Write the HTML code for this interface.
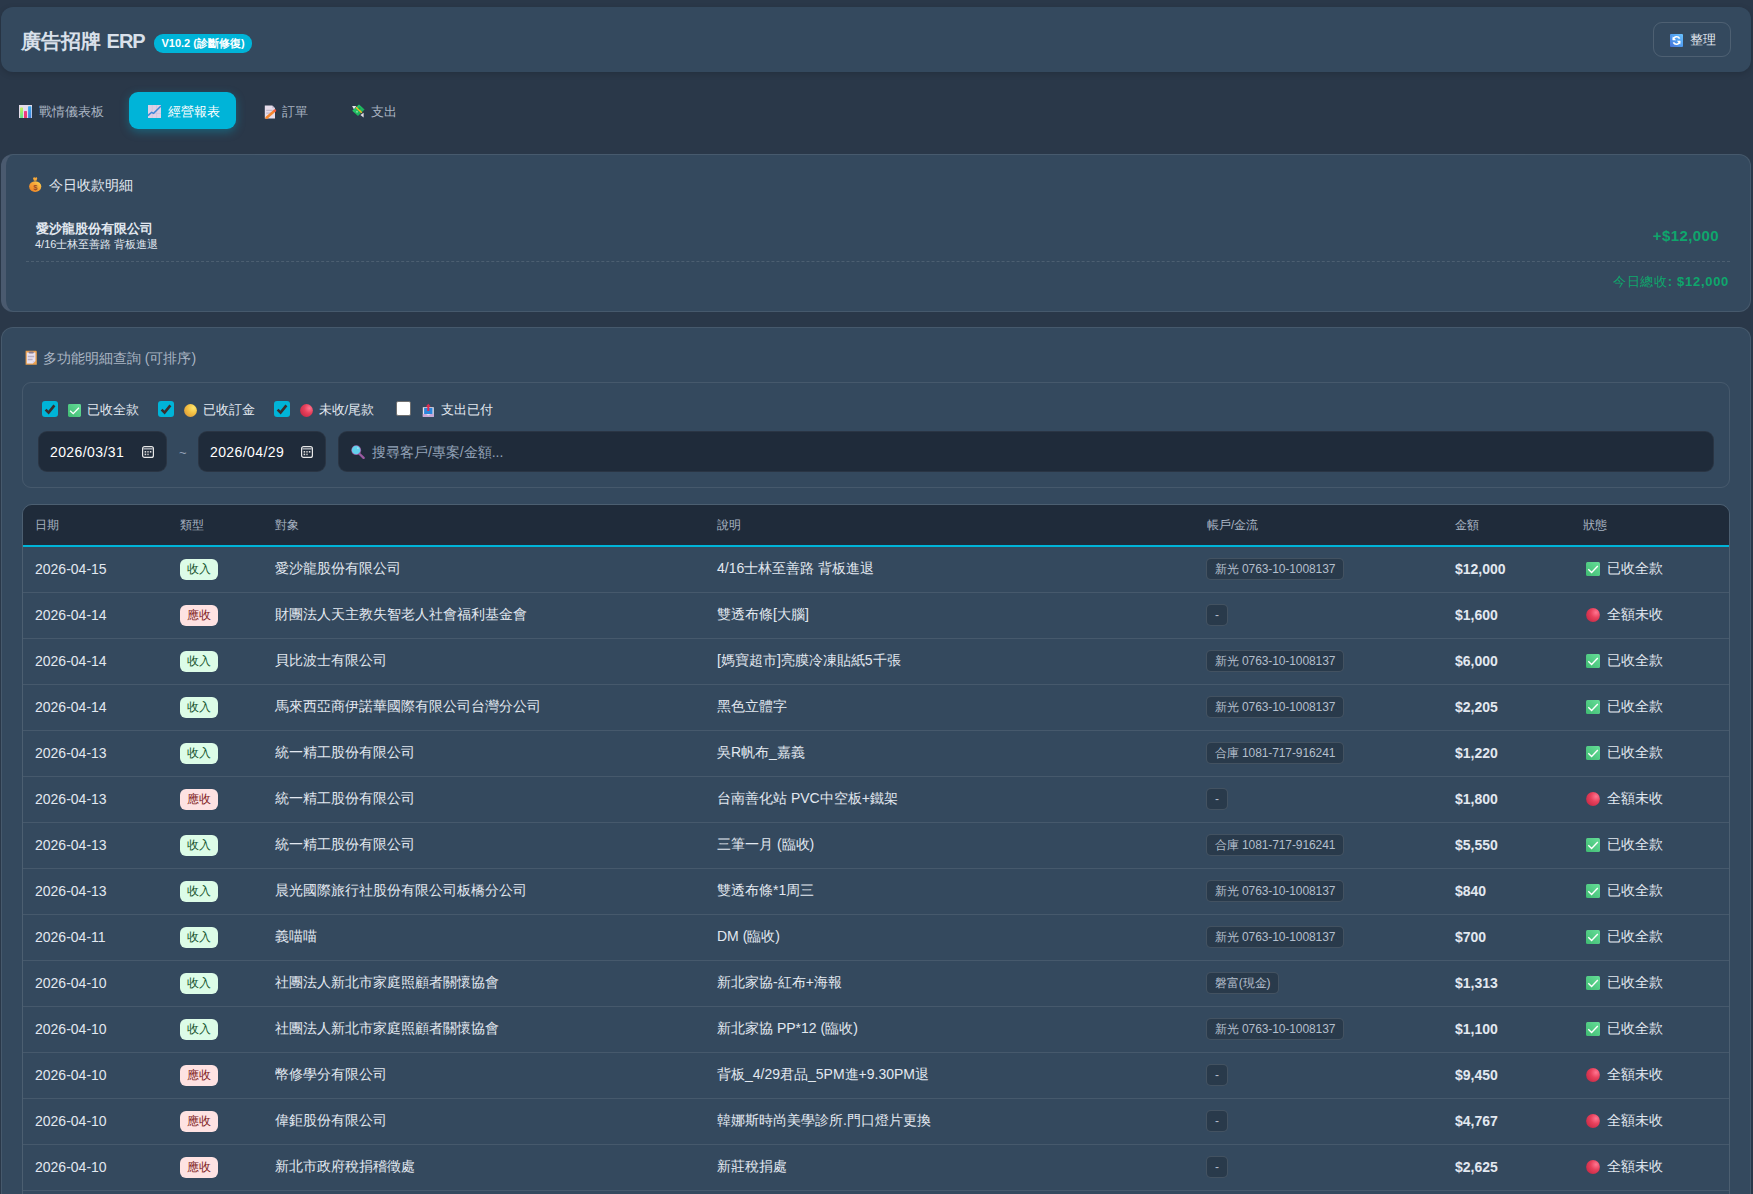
<!DOCTYPE html>
<html><head><meta charset="utf-8">
<style>
*{box-sizing:border-box;margin:0;padding:0}
html,body{width:1753px;height:1194px;overflow:hidden;background:#2a3849;font-family:"Liberation Sans",sans-serif;color:#e2e8f0}
.abs{position:absolute}
.card{position:absolute;background:#34495e;border-radius:12px}
#hdr{left:1px;top:7px;width:1750px;height:65px;box-shadow:0 2px 6px rgba(0,0,0,.15)}
#title{left:20px;top:22px;font-size:20px;font-weight:bold;color:#d9e0ea;line-height:24px;white-space:nowrap}
#badge{left:153px;top:27px;width:98px;height:19px;border-radius:9px;background:#00b4d8;color:#fff;font-size:11px;font-weight:bold;line-height:19px;text-align:center;white-space:nowrap}
#btn{left:1652px;top:15px;width:78px;height:35px;border:1px solid rgba(255,255,255,.13);border-radius:9px;font-size:13px;color:#e2e8f0;line-height:33px;white-space:nowrap;padding-left:16px}
.emo{font-size:13px}
.ei{vertical-align:-2px}
.tab .ei{vertical-align:-2px;margin-right:3px}
.tab{position:absolute;top:92px;height:37px;line-height:39px;font-size:13px;color:#a9b4c2;white-space:nowrap;border-radius:9px}
.tab.on{background:#00b4d8;color:#fff;font-weight:500;box-shadow:0 3px 10px rgba(0,180,216,.35)}
#today{left:1px;top:154px;width:1750px;height:158px;border:1px solid rgba(255,255,255,.09);border-left:5px solid #4a5a6f}
#main{left:1px;top:327px;width:1750px;height:900px;border:1px solid rgba(255,255,255,.09)}
.ttl{position:absolute;font-size:14px;white-space:nowrap;line-height:20px}
#filter{position:absolute;left:20px;top:54px;width:1708px;height:106px;border:1px solid rgba(255,255,255,.09);border-radius:9px}
.cb{position:absolute;top:18px;width:16px;height:16px;border-radius:3px;background:#00b4d8}
.cb.off{background:#fff;border:1px solid #6f6f6f;border-radius:2px;width:15px;height:15px;top:18px}
.cbl .emo{position:relative;top:2px}
.cbl .ic{position:relative;top:3px;margin-right:2px}
.cbl{position:absolute;top:18px;font-size:13px;line-height:18px;white-space:nowrap;color:#e2e8f0}
.cal{position:absolute;right:12px;top:14px}
.inp{position:absolute;top:48px;height:41px;background:#1f2b3a;border-radius:9px;border:1px solid rgba(255,255,255,.05);font-size:14px;line-height:41px;color:#fff;white-space:nowrap}
#tbl{position:absolute;left:20px;top:176px;width:1708px;height:720px;border:1px solid rgba(255,255,255,.12);border-radius:10px;overflow:hidden}
table{border-collapse:collapse;table-layout:fixed;width:1706px}
thead th{background:#1f2b3a;height:41px;text-align:left;font-weight:normal;font-size:12px;color:#a8b3c1;padding:0 12px;border-bottom:2px solid #00b4d8}
tbody td{height:46px;padding:0 12px;font-size:14px;color:#e2e8f0;border-bottom:1px solid rgba(255,255,255,.09);white-space:nowrap}
.bdg{display:inline-block;width:38px;height:21px;line-height:21px;text-align:center;font-size:12px;border-radius:6px;vertical-align:middle}
.bdg.in{background:#dcfce7;color:#14532d}
.bdg.ar{background:#fee2e2;color:#7f1d1d}
.pill{display:inline-block;height:22px;line-height:21px;padding:0 8px;margin-left:-1px;font-size:12px;color:#b4bfcc;background:rgba(0,0,0,.2);border:1px solid rgba(255,255,255,.12);border-radius:5px;vertical-align:middle;letter-spacing:-.1px}
.amt{font-weight:bold}
.sti{margin-right:7px;margin-left:3px;vertical-align:-3px}
</style></head><body>
<svg width="0" height="0" style="position:absolute"><defs>
<linearGradient id="gok" x1="0" y1="1" x2="1" y2="0"><stop offset="0" stop-color="#3fba72"/><stop offset="1" stop-color="#66de98"/></linearGradient>
<radialGradient id="gred" cx="0.72" cy="0.32" r="0.85"><stop offset="0" stop-color="#ff7590"/><stop offset="0.45" stop-color="#e8415c"/><stop offset="1" stop-color="#c42844"/></radialGradient>
<radialGradient id="gyel" cx="0.72" cy="0.3" r="0.85"><stop offset="0" stop-color="#ffe66e"/><stop offset="0.5" stop-color="#f3c143"/><stop offset="1" stop-color="#dc9a3a"/></radialGradient>
<linearGradient id="gblu" x1="0" y1="1" x2="1" y2="0"><stop offset="0" stop-color="#4670d6"/><stop offset="0.5" stop-color="#4f9cf0"/><stop offset="1" stop-color="#6cc4ff"/></linearGradient>
<linearGradient id="gbag" x1="0" y1="1" x2="1" y2="0"><stop offset="0" stop-color="#ec7d22"/><stop offset="0.6" stop-color="#f6a83a"/><stop offset="1" stop-color="#ffdc55"/></linearGradient>
<linearGradient id="gbar1" x1="0" y1="0" x2="0" y2="1"><stop offset="0" stop-color="#c4f25a"/><stop offset="1" stop-color="#5ee38a"/></linearGradient>
<linearGradient id="gbar2" x1="0" y1="0" x2="0" y2="1"><stop offset="0" stop-color="#f2398c"/><stop offset="1" stop-color="#e93a6a"/></linearGradient>
<linearGradient id="gbar3" x1="0" y1="0" x2="0" y2="1"><stop offset="0" stop-color="#3aaaf2"/><stop offset="1" stop-color="#3f7fd8"/></linearGradient>
<linearGradient id="gcash" x1="0" y1="0" x2="1" y2="1"><stop offset="0" stop-color="#27d46a"/><stop offset="1" stop-color="#1aa456"/></linearGradient>
</defs></svg>

<div class="card" id="hdr">
  <div class="abs" id="title">廣告招牌 <span style="letter-spacing:-1px">ERP</span></div>
  <div class="abs" id="badge">V10.2 (診斷修復)</div>
  <div class="abs" id="btn"><svg class="ic" width="13" height="13" viewBox="0 0 13 13" style="vertical-align:-3px;margin-right:3px"><rect x="0" y="0" width="13" height="13" rx="1" fill="url(#gblu)"/><path d="M3.2 5.6 A3.4 3.4 0 0 1 9.6 4.6" fill="none" stroke="#fff" stroke-width="1.6"/><path d="M2.6 2.6 L2.6 6.2 L6.2 6.2 Z" fill="#fff"/><path d="M9.8 7.4 A3.4 3.4 0 0 1 3.4 8.4" fill="none" stroke="#fff" stroke-width="1.6"/><path d="M10.4 10.4 L10.4 6.8 L6.8 6.8 Z" fill="#fff"/></svg> 整理</div>
</div>

<div class="tab" style="left:1px;width:120px;padding-left:18px"><svg class="ei" width="13" height="13" viewBox="0 0 13 13"><rect x="0" y="0" width="13" height="13" fill="#e4dcea"/><rect x="1.1" y="2.5" width="2.9" height="10.5" rx="0.6" fill="url(#gbar1)"/><rect x="5" y="6.1" width="3" height="6.9" rx="0.6" fill="url(#gbar2)"/><rect x="9.1" y="1.2" width="3.2" height="11.8" rx="0.6" fill="url(#gbar3)"/></svg> 戰情儀表板</div>
<div class="tab on" style="left:129px;width:107px;padding-left:19px"><svg class="ei" width="13" height="13" viewBox="0 0 13 13"><rect x="0" y="0" width="13" height="13" fill="#ddd0e6"/><path d="M4.3 0V13M8.6 0V13M0 8.5H13" stroke="#cbbdd6" stroke-width="0.5"/><path d="M0 10.6 L3.6 7.3 L5.6 8.3 L13 1" fill="none" stroke="#3c86d8" stroke-width="1.5"/></svg> 經營報表</div>
<div class="tab" style="left:244px;width:83px;padding-left:18px"><svg class="ei" width="13" height="13" viewBox="0 0 13 13" style="overflow:visible"><g transform="translate(2.2,0.5)"><path d="M0.6 0 H8 L10.8 2.8 V13 H0.6 Z" fill="#e6dcea"/><path d="M8 0 V2.8 H10.8" fill="#c8bcd0"/><path d="M2 4.8H8.4M2 7.6H7" stroke="#b6aabf" stroke-width="0.9"/><path d="M2.4 12.2 L9.6 6" stroke="#f5862e" stroke-width="2.6" stroke-linecap="round"/><circle cx="10.6" cy="5.2" r="1.4" fill="#f0583f"/></g></svg> 訂單</div>
<div class="tab" style="left:333px;width:83px;padding-left:18px"><svg class="ei" width="13" height="13" viewBox="0 0 13 13" style="overflow:visible"><g transform="translate(0.8,-0.6)"><path d="M0.3 1.6 H4.5 L2.2 5 Z" fill="#e8e4ea"/><path d="M11.8 13 V8.4 L8.6 10.6 Z" fill="#e2dde6"/><path d="M0.4 6.4 L7.2 0 L12.8 5 L6.2 11.6 Z" fill="url(#gcash)"/><path d="M4.3 2.8 L10 8.4" stroke="#f7b521" stroke-width="1.5"/><circle cx="7.7" cy="3.9" r="1.1" fill="#159a4a"/><circle cx="5.2" cy="7.4" r="1" fill="#7ee0a0"/></g></svg> 支出</div>

<div class="card" id="today">
  <div class="ttl" style="left:22px;top:20px"><svg class="ei" width="13" height="15" viewBox="0 0 13 15" style="margin-right:3px;margin-left:1px"><path d="M4 1.2 L5.1 0 L6.1 0.9 L7.2 0 L8.3 1.2 L7.4 3.8 H4.9 Z" fill="#f6a83a"/><ellipse cx="6.2" cy="9.6" rx="6.1" ry="5.3" fill="url(#gbag)"/><text x="6.3" y="12.6" font-size="7.5" font-family="Liberation Sans" font-weight="bold" fill="#9a4a26" text-anchor="middle">$</text></svg> 今日收款明細</div>
  <div class="abs" style="left:30px;top:66px;font-size:13px;font-weight:bold;line-height:16px;white-space:nowrap">愛沙龍股份有限公司</div>
  <div class="abs" style="left:29px;top:82px;font-size:11px;line-height:14px;white-space:nowrap">4/16士林至善路 背板進退</div>
  <div class="abs" style="right:31px;top:72px;font-size:15px;font-weight:bold;color:#0ea66c;line-height:18px;letter-spacing:.4px">+$12,000</div>
  <div class="abs" style="left:20px;top:106px;width:1704px;border-top:1px dashed rgba(255,255,255,.12)"></div>
  <div class="abs" style="right:21px;top:118px;font-size:13px;font-weight:bold;color:#0ea66c;line-height:18px;letter-spacing:.7px"><span style="font-weight:normal">今日總收</span>: $12,000</div>
</div>

<div class="card" id="main">
  <div class="ttl" style="left:22px;top:20px;color:#aab5c3"><svg class="ei" width="12" height="15" viewBox="0 0 12 15" style="overflow:visible;margin-right:3px"><g transform="translate(1.6,0.6)"><path d="M0 0.2 H10.6 L11.2 0.9 V14.2 H0 Z" fill="#eaa04e"/><path d="M1.2 2 H9.8 V10.4 L7.2 13 H1.2 Z" fill="#e8e2f0"/><path d="M7.2 13 V10.4 H9.8 Z" fill="#d6cce0"/><rect x="3" y="0.8" width="5.2" height="2.2" rx="1" fill="#8a7c8e"/><path d="M2.2 5.9H8.6M2.2 8.9H7" stroke="#b9b0c4" stroke-width="1.3"/></g></svg> 多功能明細查詢 (可排序)</div>
  <div id="filter">
    <div class="cb" style="left:19px"><svg width="16" height="16" viewBox="0 0 16 16" style="position:absolute;left:0;top:0"><path d="M3.6 8.6 L6.6 11.6 L12.4 4.4" fill="none" stroke="#3a2e2e" stroke-width="2.6" stroke-linecap="butt" stroke-linejoin="miter"/></svg></div><div class="cbl" style="left:45px"><svg class="ic" width="13" height="13" viewBox="0 0 14 14"><rect width="14" height="14" rx="1.5" fill="url(#gok)"/><path d="M2.3 7.3 L5.6 10.4 L11.8 4" fill="none" stroke="#fff" stroke-width="1.4"/></svg> 已收全款</div>
    <div class="cb" style="left:135px"><svg width="16" height="16" viewBox="0 0 16 16" style="position:absolute;left:0;top:0"><path d="M3.6 8.6 L6.6 11.6 L12.4 4.4" fill="none" stroke="#3a2e2e" stroke-width="2.6" stroke-linecap="butt" stroke-linejoin="miter"/></svg></div><div class="cbl" style="left:161px"><svg class="ic" width="13" height="13" viewBox="0 0 14 14"><circle cx="7" cy="7" r="6.9" fill="url(#gyel)"/></svg> 已收訂金</div>
    <div class="cb" style="left:251px"><svg width="16" height="16" viewBox="0 0 16 16" style="position:absolute;left:0;top:0"><path d="M3.6 8.6 L6.6 11.6 L12.4 4.4" fill="none" stroke="#3a2e2e" stroke-width="2.6" stroke-linecap="butt" stroke-linejoin="miter"/></svg></div><div class="cbl" style="left:277px"><svg class="ic" width="13" height="13" viewBox="0 0 14 14"><circle cx="7" cy="7" r="6.9" fill="url(#gred)"/></svg> 未收/尾款</div>
    <div class="cb off" style="left:373px"></div><div class="cbl" style="left:399px"><svg class="ei" width="11" height="13" viewBox="0 0 11 13" style="overflow:visible;margin-right:4px"><g transform="translate(0.8,0.8)"><path d="M0 3.4 H11 V13 H0 Z" fill="#e6e0ec"/><rect x="1.3" y="4.2" width="8.4" height="6" fill="#2c86dc"/><path d="M0 10.2 H11 V13 H0 Z" fill="#c8a6d8"/><path d="M3.2 10.2 L5.5 11.6 L7.8 10.2" fill="#e6e0ec"/><path d="M5.5 0 L8 2.6 H6.5 V7.2 H4.5 V2.6 H3 Z" fill="#e02a52"/></g></svg> 支出已付</div>
    <div class="inp" style="left:15px;width:129px;padding-left:11px;letter-spacing:.4px">2026/03/31<svg class="cal" width="12" height="12" viewBox="0 0 12 12"><rect x="0.6" y="0.6" width="10.8" height="10.8" rx="2" fill="none" stroke="#e8e8e8" stroke-width="1.2"/><rect x="1.2" y="2" width="9.6" height="1.6" fill="#9aa0a8"/><rect x="2.6" y="5" width="1.6" height="1.6" fill="#ddd"/><rect x="5.2" y="5" width="1.6" height="1.6" fill="#bbb"/><rect x="7.8" y="5" width="1.6" height="1.6" fill="#ddd"/><rect x="2.6" y="7.6" width="1.6" height="1.6" fill="#ddd"/><rect x="5.2" y="7.6" width="1.6" height="1.6" fill="#bbb"/></svg></div>
    <div class="abs" style="left:156px;top:60px;color:#94a3b8;font-size:13px;line-height:20px">~</div>
    <div class="inp" style="left:175px;width:128px;padding-left:11px;letter-spacing:.4px">2026/04/29<svg class="cal" width="12" height="12" viewBox="0 0 12 12"><rect x="0.6" y="0.6" width="10.8" height="10.8" rx="2" fill="none" stroke="#e8e8e8" stroke-width="1.2"/><rect x="1.2" y="2" width="9.6" height="1.6" fill="#9aa0a8"/><rect x="2.6" y="5" width="1.6" height="1.6" fill="#ddd"/><rect x="5.2" y="5" width="1.6" height="1.6" fill="#bbb"/><rect x="7.8" y="5" width="1.6" height="1.6" fill="#ddd"/><rect x="2.6" y="7.6" width="1.6" height="1.6" fill="#ddd"/><rect x="5.2" y="7.6" width="1.6" height="1.6" fill="#bbb"/></svg></div>
    <div class="inp" style="left:315px;width:1376px;padding-left:12px;color:#94a3b8"><svg class="ei" width="14" height="14" viewBox="0 0 14 14" style="margin-right:3px"><path d="M8.6 9 L12.6 12.8" stroke="#9a5aa0" stroke-width="2.4" stroke-linecap="round"/><circle cx="5.2" cy="5.2" r="4.9" fill="#9a5aa0"/><circle cx="5.1" cy="5" r="4.3" fill="#62d0ec"/><circle cx="6.9" cy="3.1" r="0.9" fill="#a8e6f6"/></svg> 搜尋客戶/專案/金額...</div>
  </div>
  <div id="tbl">
    <table>
      <colgroup><col style="width:145px"><col style="width:95px"><col style="width:442px"><col style="width:490px"><col style="width:248px"><col style="width:128px"><col></colgroup>
      <thead><tr><th>日期</th><th>類型</th><th>對象</th><th>說明</th><th>帳戶/金流</th><th>金額</th><th>狀態</th></tr></thead>
      <tbody>
<tr><td>2026-04-15</td><td><span class="bdg in">收入</span></td><td>愛沙龍股份有限公司</td><td>4/16士林至善路 背板進退</td><td><span class="pill">新光 0763-10-1008137</span></td><td class="amt">$12,000</td><td class="st"><svg class="sti" width="14" height="14" viewBox="0 0 14 14"><rect width="14" height="14" rx="1.5" fill="url(#gok)"/><path d="M2.3 7.3 L5.6 10.4 L11.8 4" fill="none" stroke="#fff" stroke-width="1.4"/></svg>已收全款</td></tr>
<tr><td>2026-04-14</td><td><span class="bdg ar">應收</span></td><td>財團法人天主教失智老人社會福利基金會</td><td>雙透布條[大腦]</td><td><span class="pill dash">-</span></td><td class="amt">$1,600</td><td class="st"><svg class="sti" width="14" height="14" viewBox="0 0 14 14"><circle cx="7" cy="7" r="6.9" fill="url(#gred)"/></svg>全額未收</td></tr>
<tr><td>2026-04-14</td><td><span class="bdg in">收入</span></td><td>貝比波士有限公司</td><td>[媽寶超市]亮膜冷凍貼紙5千張</td><td><span class="pill">新光 0763-10-1008137</span></td><td class="amt">$6,000</td><td class="st"><svg class="sti" width="14" height="14" viewBox="0 0 14 14"><rect width="14" height="14" rx="1.5" fill="url(#gok)"/><path d="M2.3 7.3 L5.6 10.4 L11.8 4" fill="none" stroke="#fff" stroke-width="1.4"/></svg>已收全款</td></tr>
<tr><td>2026-04-14</td><td><span class="bdg in">收入</span></td><td>馬來西亞商伊諾華國際有限公司台灣分公司</td><td>黑色立體字</td><td><span class="pill">新光 0763-10-1008137</span></td><td class="amt">$2,205</td><td class="st"><svg class="sti" width="14" height="14" viewBox="0 0 14 14"><rect width="14" height="14" rx="1.5" fill="url(#gok)"/><path d="M2.3 7.3 L5.6 10.4 L11.8 4" fill="none" stroke="#fff" stroke-width="1.4"/></svg>已收全款</td></tr>
<tr><td>2026-04-13</td><td><span class="bdg in">收入</span></td><td>統一精工股份有限公司</td><td>吳R帆布_嘉義</td><td><span class="pill">合庫 1081-717-916241</span></td><td class="amt">$1,220</td><td class="st"><svg class="sti" width="14" height="14" viewBox="0 0 14 14"><rect width="14" height="14" rx="1.5" fill="url(#gok)"/><path d="M2.3 7.3 L5.6 10.4 L11.8 4" fill="none" stroke="#fff" stroke-width="1.4"/></svg>已收全款</td></tr>
<tr><td>2026-04-13</td><td><span class="bdg ar">應收</span></td><td>統一精工股份有限公司</td><td>台南善化站 PVC中空板+鐵架</td><td><span class="pill dash">-</span></td><td class="amt">$1,800</td><td class="st"><svg class="sti" width="14" height="14" viewBox="0 0 14 14"><circle cx="7" cy="7" r="6.9" fill="url(#gred)"/></svg>全額未收</td></tr>
<tr><td>2026-04-13</td><td><span class="bdg in">收入</span></td><td>統一精工股份有限公司</td><td>三筆一月 (臨收)</td><td><span class="pill">合庫 1081-717-916241</span></td><td class="amt">$5,550</td><td class="st"><svg class="sti" width="14" height="14" viewBox="0 0 14 14"><rect width="14" height="14" rx="1.5" fill="url(#gok)"/><path d="M2.3 7.3 L5.6 10.4 L11.8 4" fill="none" stroke="#fff" stroke-width="1.4"/></svg>已收全款</td></tr>
<tr><td>2026-04-13</td><td><span class="bdg in">收入</span></td><td>晨光國際旅行社股份有限公司板橋分公司</td><td>雙透布條*1周三</td><td><span class="pill">新光 0763-10-1008137</span></td><td class="amt">$840</td><td class="st"><svg class="sti" width="14" height="14" viewBox="0 0 14 14"><rect width="14" height="14" rx="1.5" fill="url(#gok)"/><path d="M2.3 7.3 L5.6 10.4 L11.8 4" fill="none" stroke="#fff" stroke-width="1.4"/></svg>已收全款</td></tr>
<tr><td>2026-04-11</td><td><span class="bdg in">收入</span></td><td>義喵喵</td><td>DM (臨收)</td><td><span class="pill">新光 0763-10-1008137</span></td><td class="amt">$700</td><td class="st"><svg class="sti" width="14" height="14" viewBox="0 0 14 14"><rect width="14" height="14" rx="1.5" fill="url(#gok)"/><path d="M2.3 7.3 L5.6 10.4 L11.8 4" fill="none" stroke="#fff" stroke-width="1.4"/></svg>已收全款</td></tr>
<tr><td>2026-04-10</td><td><span class="bdg in">收入</span></td><td>社團法人新北市家庭照顧者關懷協會</td><td>新北家協-紅布+海報</td><td><span class="pill">磐富(現金)</span></td><td class="amt">$1,313</td><td class="st"><svg class="sti" width="14" height="14" viewBox="0 0 14 14"><rect width="14" height="14" rx="1.5" fill="url(#gok)"/><path d="M2.3 7.3 L5.6 10.4 L11.8 4" fill="none" stroke="#fff" stroke-width="1.4"/></svg>已收全款</td></tr>
<tr><td>2026-04-10</td><td><span class="bdg in">收入</span></td><td>社團法人新北市家庭照顧者關懷協會</td><td>新北家協 PP*12 (臨收)</td><td><span class="pill">新光 0763-10-1008137</span></td><td class="amt">$1,100</td><td class="st"><svg class="sti" width="14" height="14" viewBox="0 0 14 14"><rect width="14" height="14" rx="1.5" fill="url(#gok)"/><path d="M2.3 7.3 L5.6 10.4 L11.8 4" fill="none" stroke="#fff" stroke-width="1.4"/></svg>已收全款</td></tr>
<tr><td>2026-04-10</td><td><span class="bdg ar">應收</span></td><td>幣修學分有限公司</td><td>背板_4/29君品_5PM進+9.30PM退</td><td><span class="pill dash">-</span></td><td class="amt">$9,450</td><td class="st"><svg class="sti" width="14" height="14" viewBox="0 0 14 14"><circle cx="7" cy="7" r="6.9" fill="url(#gred)"/></svg>全額未收</td></tr>
<tr><td>2026-04-10</td><td><span class="bdg ar">應收</span></td><td>偉鉅股份有限公司</td><td>韓娜斯時尚美學診所.門口燈片更換</td><td><span class="pill dash">-</span></td><td class="amt">$4,767</td><td class="st"><svg class="sti" width="14" height="14" viewBox="0 0 14 14"><circle cx="7" cy="7" r="6.9" fill="url(#gred)"/></svg>全額未收</td></tr>
<tr><td>2026-04-10</td><td><span class="bdg ar">應收</span></td><td>新北市政府稅捐稽徵處</td><td>新莊稅捐處</td><td><span class="pill dash">-</span></td><td class="amt">$2,625</td><td class="st"><svg class="sti" width="14" height="14" viewBox="0 0 14 14"><circle cx="7" cy="7" r="6.9" fill="url(#gred)"/></svg>全額未收</td></tr>
      </tbody>
    </table>
  </div>
</div>

</body></html>
